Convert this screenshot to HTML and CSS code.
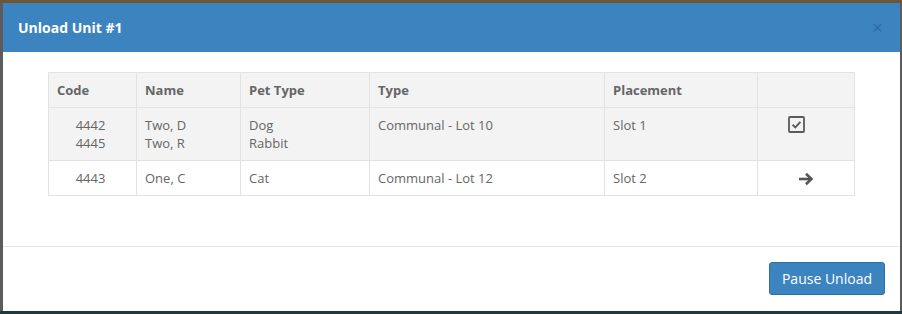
FILE: index.html
```html
<!DOCTYPE html>
<html lang="en">
  <head>
    <meta charset="UTF-8" />
    <meta name="viewport" content="width=device-width, initial-scale=1.0" />
    <title>Unload Unit #1</title>
    <link rel="stylesheet" href="styles.css">
  </head>
  <body>
    <div class="modal">
      <header class="modal-header">
        <h4 class="modal-title">Unload Unit #1</h4>
        <button class="close" type="button">&times;</button>
      </header>

      <div class="modal-body">
        <table class="unload-table">
          <colgroup>
            <col style="width: 88px">
            <col style="width: 104px">
            <col style="width: 129px">
            <col style="width: 235px">
            <col style="width: 153px">
            <col>
          </colgroup>
          <thead>
            <tr>
              <th>Code</th>
              <th>Name</th>
              <th>Pet Type</th>
              <th>Type</th>
              <th>Placement</th>
              <th></th>
            </tr>
          </thead>
          <tbody>
            <tr class="striped">
              <td class="code">4442<br>4445</td>
              <td>Two, D<br>Two, R</td>
              <td>Dog<br>Rabbit</td>
              <td>Communal - Lot 10</td>
              <td>Slot 1</td>
              <td class="action">
                <!-- done -->
                <svg class="icon icon-done" width="17" height="17" viewBox="0 0 17 17">
                  <rect x="1" y="1" width="15" height="15" rx="1" fill="none" stroke="#5a5a5a" stroke-width="1.8"/>
                  <path d="M4.6 8.8 L7.3 11.4 L12.4 5.8" fill="none" stroke="#5a5a5a" stroke-width="1.9"/>
                </svg>
              </td>
            </tr>
            <tr>
              <td class="code">4443</td>
              <td>One, C</td>
              <td>Cat</td>
              <td>Communal - Lot 12</td>
              <td>Slot 2</td>
              <td class="action">
                <!-- next -->
                <svg class="icon" width="16" height="14" viewBox="0 0 16 14">
                  <path d="M1 7 H13" stroke="#555" stroke-width="2.6"/>
                  <path d="M8 1.8 L13.4 7 L8 12.2" fill="none" stroke="#555" stroke-width="2.6"/>
                </svg>
              </td>
            </tr>
          </tbody>
        </table>
      </div>

      <footer class="modal-footer">
        <button class="btn-primary" type="button">Pause Unload</button>
      </footer>
    </div>
  </body>
</html>
```

FILE: styles.css
```css
* {
  margin: 0;
  padding: 0;
  box-sizing: border-box;
}

body {
  width: 902px;
  height: 314px;
  overflow: hidden;
  background: #5c5c5c;
  border-top: 3px solid #6e5634;
  border-bottom: 3px solid #1f3940;
  font-family: "Open Sans", "Liberation Sans", Arial, sans-serif;
  font-size: 13px;
  line-height: 18px;
  color: #666;
}

.modal {
  margin: 0 2px 0 3px;
  height: 308px;
  background: #fff;
  display: flex;
  flex-direction: column;
}

.modal-header {
  height: 49px;
  padding: 0 15px;
  background: #3c84bf;
  display: flex;
  align-items: center;
  justify-content: space-between;
}

.modal-title {
  font-size: 14px;
  font-weight: 700;
  color: #fff;
}

.close {
  background: none;
  border: none;
  font-family: "Liberation Sans", Arial, sans-serif;
  font-size: 19px;
  font-weight: 400;
  color: #2c6ea6;
  cursor: pointer;
  margin-right: 2px;
}

.modal-body {
  flex: 1;
  padding: 20px 45px 0;
  border-bottom: 1px solid #e5e5e5;
}

.unload-table {
  width: 807px;
  border-collapse: collapse;
  border: 1px solid #e2e2e2;
}

.unload-table th,
.unload-table td {
  padding: 8px 8px;
  border: 1px solid #e2e2e2;
  text-align: left;
  vertical-align: top;
}

.unload-table th {
  height: 35px;
  font-weight: 700;
  color: #666;
  background: #f3f3f3;
}

.unload-table td {
  color: #666;
}

.unload-table tr.striped td {
  background: #f3f3f3;
}

.unload-table td.code {
  text-align: center;
  padding-right: 12px;
}

.unload-table td.action {
  text-align: center;
}

.icon {
  display: inline-block;
  vertical-align: -3px;
}

.icon-done {
  margin-right: 20px;
}

.modal-footer {
  height: 64px;
  padding: 15px 15px 0;
  display: flex;
  justify-content: flex-end;
  align-items: flex-start;
}

.btn-primary {
  height: 33px;
  padding: 0 12px;
  background: #3c84bf;
  border: 1px solid #2e6da4;
  border-radius: 3px;
  color: #fff;
  font-family: "Open Sans", "Liberation Sans", Arial, sans-serif;
  font-size: 14px;
  cursor: pointer;
}
```
